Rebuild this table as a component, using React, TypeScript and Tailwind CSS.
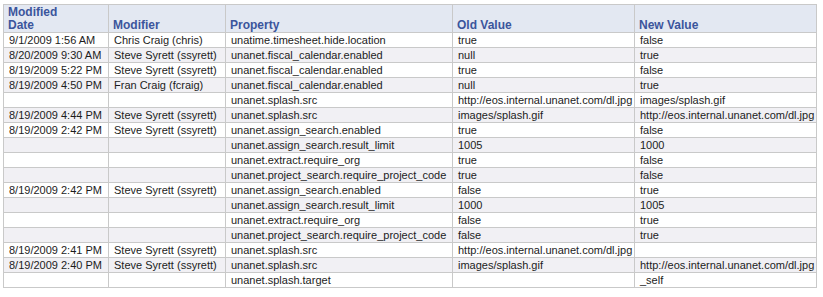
import React from "react";

type Change = {
    date: string;
    modifier: string;
    property: string;
    oldValue: string;
    newValue: string;
};

const EOS = "http://eos.internal.unanet.com/dl.jpg";

const changes: Change[] = [
    { date: "9/1/2009 1:56 AM", modifier: "Chris Craig (chris)", property: "unatime.timesheet.hide.location", oldValue: "true", newValue: "false" },
    { date: "8/20/2009 9:30 AM", modifier: "Steve Syrett (ssyrett)", property: "unanet.fiscal_calendar.enabled", oldValue: "null", newValue: "true" },
    { date: "8/19/2009 5:22 PM", modifier: "Steve Syrett (ssyrett)", property: "unanet.fiscal_calendar.enabled", oldValue: "true", newValue: "false" },
    { date: "8/19/2009 4:50 PM", modifier: "Fran Craig (fcraig)", property: "unanet.fiscal_calendar.enabled", oldValue: "null", newValue: "true" },
    { date: "", modifier: "", property: "unanet.splash.src", oldValue: EOS, newValue: "images/splash.gif" },
    { date: "8/19/2009 4:44 PM", modifier: "Steve Syrett (ssyrett)", property: "unanet.splash.src", oldValue: "images/splash.gif", newValue: EOS },
    { date: "8/19/2009 2:42 PM", modifier: "Steve Syrett (ssyrett)", property: "unanet.assign_search.enabled", oldValue: "true", newValue: "false" },
    { date: "", modifier: "", property: "unanet.assign_search.result_limit", oldValue: "1005", newValue: "1000" },
    { date: "", modifier: "", property: "unanet.extract.require_org", oldValue: "true", newValue: "false" },
    { date: "", modifier: "", property: "unanet.project_search.require_project_code", oldValue: "true", newValue: "false" },
    { date: "8/19/2009 2:42 PM", modifier: "Steve Syrett (ssyrett)", property: "unanet.assign_search.enabled", oldValue: "false", newValue: "true" },
    { date: "", modifier: "", property: "unanet.assign_search.result_limit", oldValue: "1000", newValue: "1005" },
    { date: "", modifier: "", property: "unanet.extract.require_org", oldValue: "false", newValue: "true" },
    { date: "", modifier: "", property: "unanet.project_search.require_project_code", oldValue: "false", newValue: "true" },
    { date: "8/19/2009 2:41 PM", modifier: "Steve Syrett (ssyrett)", property: "unanet.splash.src", oldValue: EOS, newValue: "" },
    { date: "8/19/2009 2:40 PM", modifier: "Steve Syrett (ssyrett)", property: "unanet.splash.src", oldValue: "images/splash.gif", newValue: EOS },
    { date: "", modifier: "", property: "unanet.splash.target", oldValue: "", newValue: "_self" },
];

const th = "border border-[#c9c9c9] h-[28px] px-[4px] py-0 text-left align-bottom text-[12px] leading-[14px] font-bold text-[#3b559c]";
const td = "border border-[#c9c9c9] h-[15px] px-[5px] py-0 text-[11px] leading-[13px] text-[#1c1c1c] whitespace-nowrap overflow-hidden";

const App: React.FC = () => {
    return (
        <div className="bg-white w-[823px] h-[297px] pl-[3px] pt-[4px]" style={{ fontFamily: '"Liberation Sans", Arial, sans-serif' }}>
            <table className="table-fixed border-collapse w-[813px]">
                <colgroup>
                    <col className="w-[105px]" />
                    <col className="w-[117px]" />
                    <col className="w-[227px]" />
                    <col className="w-[182px]" />
                    <col className="w-[182px]" />
                </colgroup>
                <thead>
                    <tr className="bg-[#e3e8f2]">
                        <th className={th}>
                            <div className="leading-[14px]">Modified</div>
                            <div className="leading-[13px]">Date</div>
                        </th>
                        <th className={th}>Modifier</th>
                        <th className={th}>Property</th>
                        <th className={th}>Old Value</th>
                        <th className={th}>New Value</th>
                    </tr>
                </thead>
                <tbody>
                    {changes.map((c, i) => (
                        <tr key={i} className={i % 2 === 1 ? "bg-[#f1f0f4]" : "bg-white"}>
                            <td className={td}>{c.date}</td>
                            <td className={td}>{c.modifier}</td>
                            <td className={td}>{c.property}</td>
                            <td className={td}>{c.oldValue}</td>
                            <td className={td}>{c.newValue}</td>
                        </tr>
                    ))}
                </tbody>
            </table>
        </div>
    );
};

export default App;
